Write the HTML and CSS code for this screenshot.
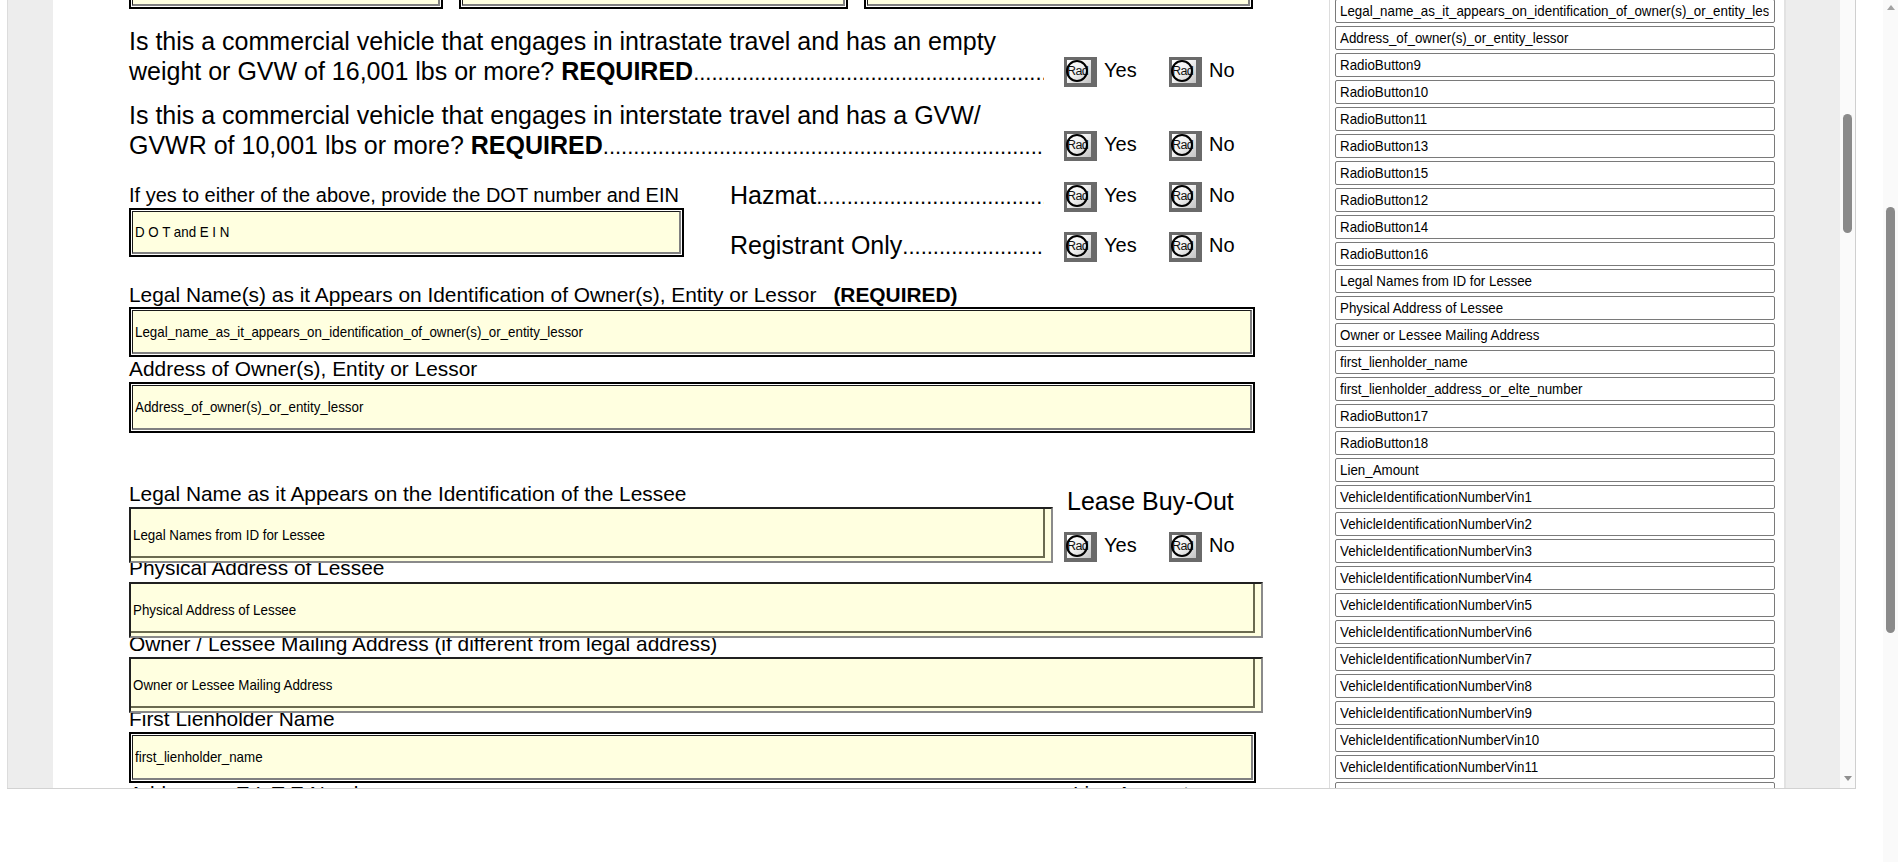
FILE: index.html
```html
<!DOCTYPE html>
<html>
<head>
<meta charset="utf-8">
<title>Form</title>
<link rel="stylesheet" href="styles.css">
</head>
<body>
<div class="screen">
  <div class="viewer">
    <div class="gutter"></div>
    <div class="page">
      <div class="page-inner">
        <div class="topfields">
          <div class="dfield f1"><div class="dfield-in"></div></div>
          <div class="dfield f2"><div class="dfield-in"></div></div>
          <div class="dfield f3"><div class="dfield-in"></div></div>
        </div>

        <div class="qrow q1">
          <div class="qtext">
            <div class="qline">Is this a commercial vehicle that engages in intrastate travel and has an empty</div>
            <div class="qline lead">weight or GVW of 16,001 lbs or more?&nbsp;<b>REQUIRED</b><span class="dots"></span></div>
          </div>
          <div class="radios">
            <div class="opt"><span class="rb"><span class="rb-in">Rad</span><span class="rb-c"></span></span><span class="rl">Yes</span></div>
            <div class="opt"><span class="rb"><span class="rb-in">Rad</span><span class="rb-c"></span></span><span class="rl">No</span></div>
          </div>
        </div>

        <div class="qrow q2">
          <div class="qtext">
            <div class="qline">Is this a commercial vehicle that engages in interstate travel and has a GVW/</div>
            <div class="qline lead">GVWR of 10,001 lbs or more?&nbsp;<b>REQUIRED</b><span class="dots"></span></div>
          </div>
          <div class="radios">
            <div class="opt"><span class="rb"><span class="rb-in">Rad</span><span class="rb-c"></span></span><span class="rl">Yes</span></div>
            <div class="opt"><span class="rb"><span class="rb-in">Rad</span><span class="rb-c"></span></span><span class="rl">No</span></div>
          </div>
        </div>

        <div class="haz">
          <div class="haz-left">
            <div class="lbl dotlbl">If yes to either of the above, provide the DOT number and EIN</div>
            <div class="dfield dot"><div class="dfield-in"><span class="ft">D O T and E I N</span></div></div>
          </div>
          <div class="haz-right">
            <div class="hrow">
              <div class="hlabel lead">Hazmat<span class="dots"></span></div>
              <div class="radios">
                <div class="opt"><span class="rb"><span class="rb-in">Rad</span><span class="rb-c"></span></span><span class="rl">Yes</span></div>
                <div class="opt"><span class="rb"><span class="rb-in">Rad</span><span class="rb-c"></span></span><span class="rl">No</span></div>
              </div>
            </div>
            <div class="hrow">
              <div class="hlabel lead">Registrant Only<span class="dots"></span></div>
              <div class="radios">
                <div class="opt"><span class="rb"><span class="rb-in">Rad</span><span class="rb-c"></span></span><span class="rl">Yes</span></div>
                <div class="opt"><span class="rb"><span class="rb-in">Rad</span><span class="rb-c"></span></span><span class="rl">No</span></div>
              </div>
            </div>
          </div>
        </div>

        <div class="lbl legal-lbl">Legal Name(s) as it Appears on Identification of Owner(s), Entity or Lessor<b class="req">(REQUIRED)</b></div>
        <div class="dfield wide h50"><div class="dfield-in"><span class="ft">Legal_name_as_it_appears_on_identification_of_owner(s)_or_entity_lessor</span></div></div>
        <div class="lbl">Address of Owner(s), Entity or Lessor</div>
        <div class="dfield wide h51 mt1"><div class="dfield-in"><span class="ft">Address_of_owner(s)_or_entity_lessor</span></div></div>

        <div class="lessee">
          <div class="lessee-left">
            <div class="lbl">Legal Name as it Appears on the Identification of the Lessee</div>
            <div class="sfield lessee-field"><div class="sfield-in"><span class="ft">Legal Names from ID for Lessee</span></div></div>
          </div>
          <div class="lessee-right">
            <div class="buyout">Lease Buy-Out</div>
            <div class="radios">
              <div class="opt"><span class="rb"><span class="rb-in">Rad</span><span class="rb-c"></span></span><span class="rl">Yes</span></div>
              <div class="opt"><span class="rb"><span class="rb-in">Rad</span><span class="rb-c"></span></span><span class="rl">No</span></div>
            </div>
          </div>
        </div>

        <div class="lbl under">Physical Address of Lessee</div>
        <div class="sfield long mt2"><div class="sfield-in"><span class="ft">Physical Address of Lessee</span></div></div>
        <div class="lbl under6">Owner / Lessee Mailing Address (if different from legal address)</div>
        <div class="sfield long mt1"><div class="sfield-in"><span class="ft">Owner or Lessee Mailing Address</span></div></div>
        <div class="lbl under6">First Lienholder Name</div>
        <div class="dfield lien h51 mt1"><div class="dfield-in"><span class="ft">first_lienholder_name</span></div></div>
        <div class="lastrow">
          <div class="lbl addr-elte">Address or E L T E Number</div>
          <div class="lbl lien-amt">Lien Amount</div>
        </div>
      </div>
    </div>

    <div class="panel">
      <div class="list">
        <div class="item"><span class="it">Legal_name_as_it_appears_on_identification_of_owner(s)_or_entity_lessor</span></div>
        <div class="item"><span class="it">Address_of_owner(s)_or_entity_lessor</span></div>
        <div class="item"><span class="it">RadioButton9</span></div>
        <div class="item"><span class="it">RadioButton10</span></div>
        <div class="item"><span class="it">RadioButton11</span></div>
        <div class="item"><span class="it">RadioButton13</span></div>
        <div class="item"><span class="it">RadioButton15</span></div>
        <div class="item"><span class="it">RadioButton12</span></div>
        <div class="item"><span class="it">RadioButton14</span></div>
        <div class="item"><span class="it">RadioButton16</span></div>
        <div class="item"><span class="it">Legal Names from ID for Lessee</span></div>
        <div class="item"><span class="it">Physical Address of Lessee</span></div>
        <div class="item"><span class="it">Owner or Lessee Mailing Address</span></div>
        <div class="item"><span class="it">first_lienholder_name</span></div>
        <div class="item"><span class="it">first_lienholder_address_or_elte_number</span></div>
        <div class="item"><span class="it">RadioButton17</span></div>
        <div class="item"><span class="it">RadioButton18</span></div>
        <div class="item"><span class="it">Lien_Amount</span></div>
        <div class="item"><span class="it">VehicleIdentificationNumberVin1</span></div>
        <div class="item"><span class="it">VehicleIdentificationNumberVin2</span></div>
        <div class="item"><span class="it">VehicleIdentificationNumberVin3</span></div>
        <div class="item"><span class="it">VehicleIdentificationNumberVin4</span></div>
        <div class="item"><span class="it">VehicleIdentificationNumberVin5</span></div>
        <div class="item"><span class="it">VehicleIdentificationNumberVin6</span></div>
        <div class="item"><span class="it">VehicleIdentificationNumberVin7</span></div>
        <div class="item"><span class="it">VehicleIdentificationNumberVin8</span></div>
        <div class="item"><span class="it">VehicleIdentificationNumberVin9</span></div>
        <div class="item"><span class="it">VehicleIdentificationNumberVin10</span></div>
        <div class="item"><span class="it">VehicleIdentificationNumberVin11</span></div>
        <div class="item"><span class="it">VehicleIdentificationNumberVin12</span></div>
      </div>
    </div>
    <div class="panel-grey"></div>
    <div class="vtrack">
      <div class="vthumb"></div>
      <div class="arrow-down"></div>
    </div>
  </div>
  <div class="pagebar">
    <div class="ptrack">
      <div class="arrow-up"></div>
      <div class="pthumb"></div>
    </div>
  </div>
</div>
</body>
</html>
```
FILE: styles.css
```css
html, body {
  margin: 0;
  padding: 0;
  background: #fff;
  overflow: hidden;
}
body {
  font-family: "Liberation Sans", Arial, sans-serif;
  color: #000;
}
.screen {
  display: flex;
  height: 862px;
  width: 1898px;
}
.viewer {
  margin-left: 7px;
  width: 1848px;
  height: 788px;
  border-right: 1px solid #cfcfcf;
  border-bottom: 1px solid #d2d2d2;
  display: flex;
  overflow: hidden;
  flex: none;
}
.gutter {
  width: 45px;
  border-left: 1px solid #dcdcdc;
  background: #ededed;
  flex: none;
}
.page {
  width: 1276px;
  flex: none;
  background: #fff;
  overflow: hidden;
}
.page-inner {
  padding-left: 76px;
}

/* condensed field text */
.ft {
  display: inline-block;
  font-size: 14.5px;
  transform: scaleX(0.92);
  transform-origin: 0 50%;
  white-space: nowrap;
}

/* top cut-off fields */
.topfields {
  display: flex;
  height: 49px;
  margin-top: -40px;
}
.topfields .f1 { width: 314px; margin-right: 16px; }
.topfields .f2 { width: 389px; margin-right: 16px; }
.topfields .f3 { width: 389px; }

/* double bordered field */
.dfield {
  box-sizing: border-box;
  border: 2px solid #000;
  padding: 1px;
  background: #fff;
  position: relative;
}
.dfield-in {
  box-sizing: border-box;
  height: 100%;
  border-style: solid;
  border-width: 1px 2px 2px 1px;
  border-color: #1a1a1a #808080 #808080 #1a1a1a;
  background: #ffffe0;
  display: flex;
  align-items: center;
  padding-left: 2px;
  white-space: nowrap;
  overflow: hidden;
}
.dot { width: 555px; height: 49px; margin-top: 1px; }
.wide { width: 1126px; }
.lien { width: 1127px; }
.h50 { height: 50px; }
.h51 { height: 51px; }
.mt1 { margin-top: 1px; }
.mt2 { margin-top: 2px; }

/* shadowed field */
.sfield {
  box-sizing: border-box;
  border-style: solid;
  border-width: 2px;
  border-color: #202020 #8a8a8a #8a8a8a #202020;
  background: #ffffe0;
  position: relative;
  height: 56px;
}
.sfield-in {
  box-sizing: border-box;
  height: 49px;
  width: calc(100% - 6px);
  border-right: 2px solid #6b6b50;
  border-bottom: 2px solid #6b6b50;
  display: flex;
  align-items: center;
  padding: 4px 0 0 2px;
  white-space: nowrap;
  overflow: hidden;
}
.lessee-field { width: 924px; margin-top: 1px; }
.long { width: 1134px; }

/* questions */
.qrow {
  display: flex;
  align-items: flex-start;
  height: 60px;
}
.q1 { margin-top: 17px; }
.q2 { margin-top: 14px; }
.qtext {
  width: 915px;
  flex: none;
  font-size: 25px;
  line-height: 30px;
}
.qline {
  white-space: nowrap;
}
.lead {
  display: flex;
  align-items: baseline;
  white-space: nowrap;
}
.lead b { font-weight: bold; }
.dots {
  flex: 1;
  min-width: 0;
  overflow: hidden;
  white-space: nowrap;
  font-size: 22px;
  font-weight: normal;
}
.dots::after {
  content: "........................................................................................................................................................................................";
}
.qrow .radios { margin-top: 31px; }

/* radios */
.radios {
  display: flex;
  margin-left: 20px;
  flex: none;
}
.opt {
  display: flex;
  align-items: flex-start;
  width: 105px;
}
.opt:last-child { width: auto; }
.rb {
  position: relative;
  display: block;
  width: 33px;
  height: 30px;
  box-sizing: border-box;
  background: #6a6a6a;
  padding: 3px 6px 4px 3px;
  flex: none;
}
.rb-in {
  display: block;
  height: 100%;
  background: linear-gradient(135deg, #ffffff 0%, #f2f2f2 45%, #c4c4c4 100%);
  font-size: 12.5px;
  line-height: 23px;
  color: #111;
  overflow: hidden;
  letter-spacing: -0.6px;
  padding-left: 0;
}
.rb-c {
  position: absolute;
  left: 2px;
  top: 3px;
  width: 22px;
  height: 22px;
  box-sizing: border-box;
  border: 2.5px solid #000;
  border-radius: 50%;
}
.rl {
  font-size: 20px;
  line-height: 26px;
  margin-left: 7px;
}

/* hazmat section */
.haz {
  display: flex;
  margin-top: 22px;
}
.haz-left {
  width: 555px;
  flex: none;
}
.lbl {
  font-size: 20.9px;
  line-height: 24px;
  white-space: nowrap;
}
.dotlbl { margin-top: 1px; font-size: 20px; }
.haz-right {
  margin-left: 46px;
}
.hrow {
  display: flex;
  align-items: flex-start;
  height: 50px;
}
.hlabel {
  width: 314px;
  flex: none;
  font-size: 25px;
  line-height: 26px;
}

.legal-lbl { margin-top: 1px; }
.req { margin-left: 17px; font-weight: bold; }

/* lessee */
.lessee {
  display: flex;
  margin-top: 49px;
}
.lessee-left { width: 924px; flex: none; }
.lessee-right { margin-left: 11px; }
.lessee-right .radios { margin-left: 0; margin-top: 17px; }
.buyout {
  font-size: 25px;
  line-height: 28px;
  margin-top: 5px;
  padding-left: 3px;
  white-space: nowrap;
}
.under { margin-top: -7px; }
.under6 { margin-top: -6px; }

.lastrow {
  display: flex;
  margin-top: -1px;
}
.addr-elte { width: 944px; }

/* right field list panel */
.panel {
  width: 454px;
  border-left: 1px solid #dddddd;
  background: #fff;
  flex: none;
  overflow: hidden;
}
.list {
  margin-top: -1px;
  padding-left: 5px;
}
.item {
  box-sizing: border-box;
  width: 440px;
  height: 24px;
  margin-bottom: 3px;
  border: 1px solid #7a7a7a;
  border-radius: 2px;
  padding: 0 5px 0 4px;
  line-height: 22px;
}
.it {
  display: block;
  overflow: hidden;
  white-space: nowrap;
}
.it::first-line { }
.item .it {
  font-size: 14.5px;
}
.it {
  transform: scaleX(0.92);
  transform-origin: 0 50%;
  width: 466px;
}
.panel-grey {
  width: 54px;
  border-left: 2px solid #e2e2e2;
  background: #ededed;
  flex: none;
}
.vtrack {
  width: 15px;
  background: #fafafa;
  flex: none;
  position: relative;
}
.vthumb {
  margin: 114px 0 0 3px;
  width: 9px;
  height: 119px;
  border-radius: 5px;
  background: #8a8a8a;
}
.arrow-down {
  position: absolute;
  left: 4px;
  top: 776px;
  width: 0;
  height: 0;
  border-left: 4px solid transparent;
  border-right: 4px solid transparent;
  border-top: 5px solid #8f8f8f;
}
.pagebar {
  width: 42px;
  flex: none;
  display: flex;
  justify-content: flex-end;
}
.ptrack {
  width: 15px;
  height: 862px;
  background: #fafafa;
  position: relative;
}
.arrow-up {
  position: absolute;
  left: 4px;
  top: 5px;
  width: 0;
  height: 0;
  border-left: 4px solid transparent;
  border-right: 4px solid transparent;
  border-bottom: 5px solid #a3a3a3;
}
.pthumb {
  margin: 207px 0 0 3px;
  width: 9px;
  height: 426px;
  border-radius: 5px;
  background: #8a8a8a;
}
```
